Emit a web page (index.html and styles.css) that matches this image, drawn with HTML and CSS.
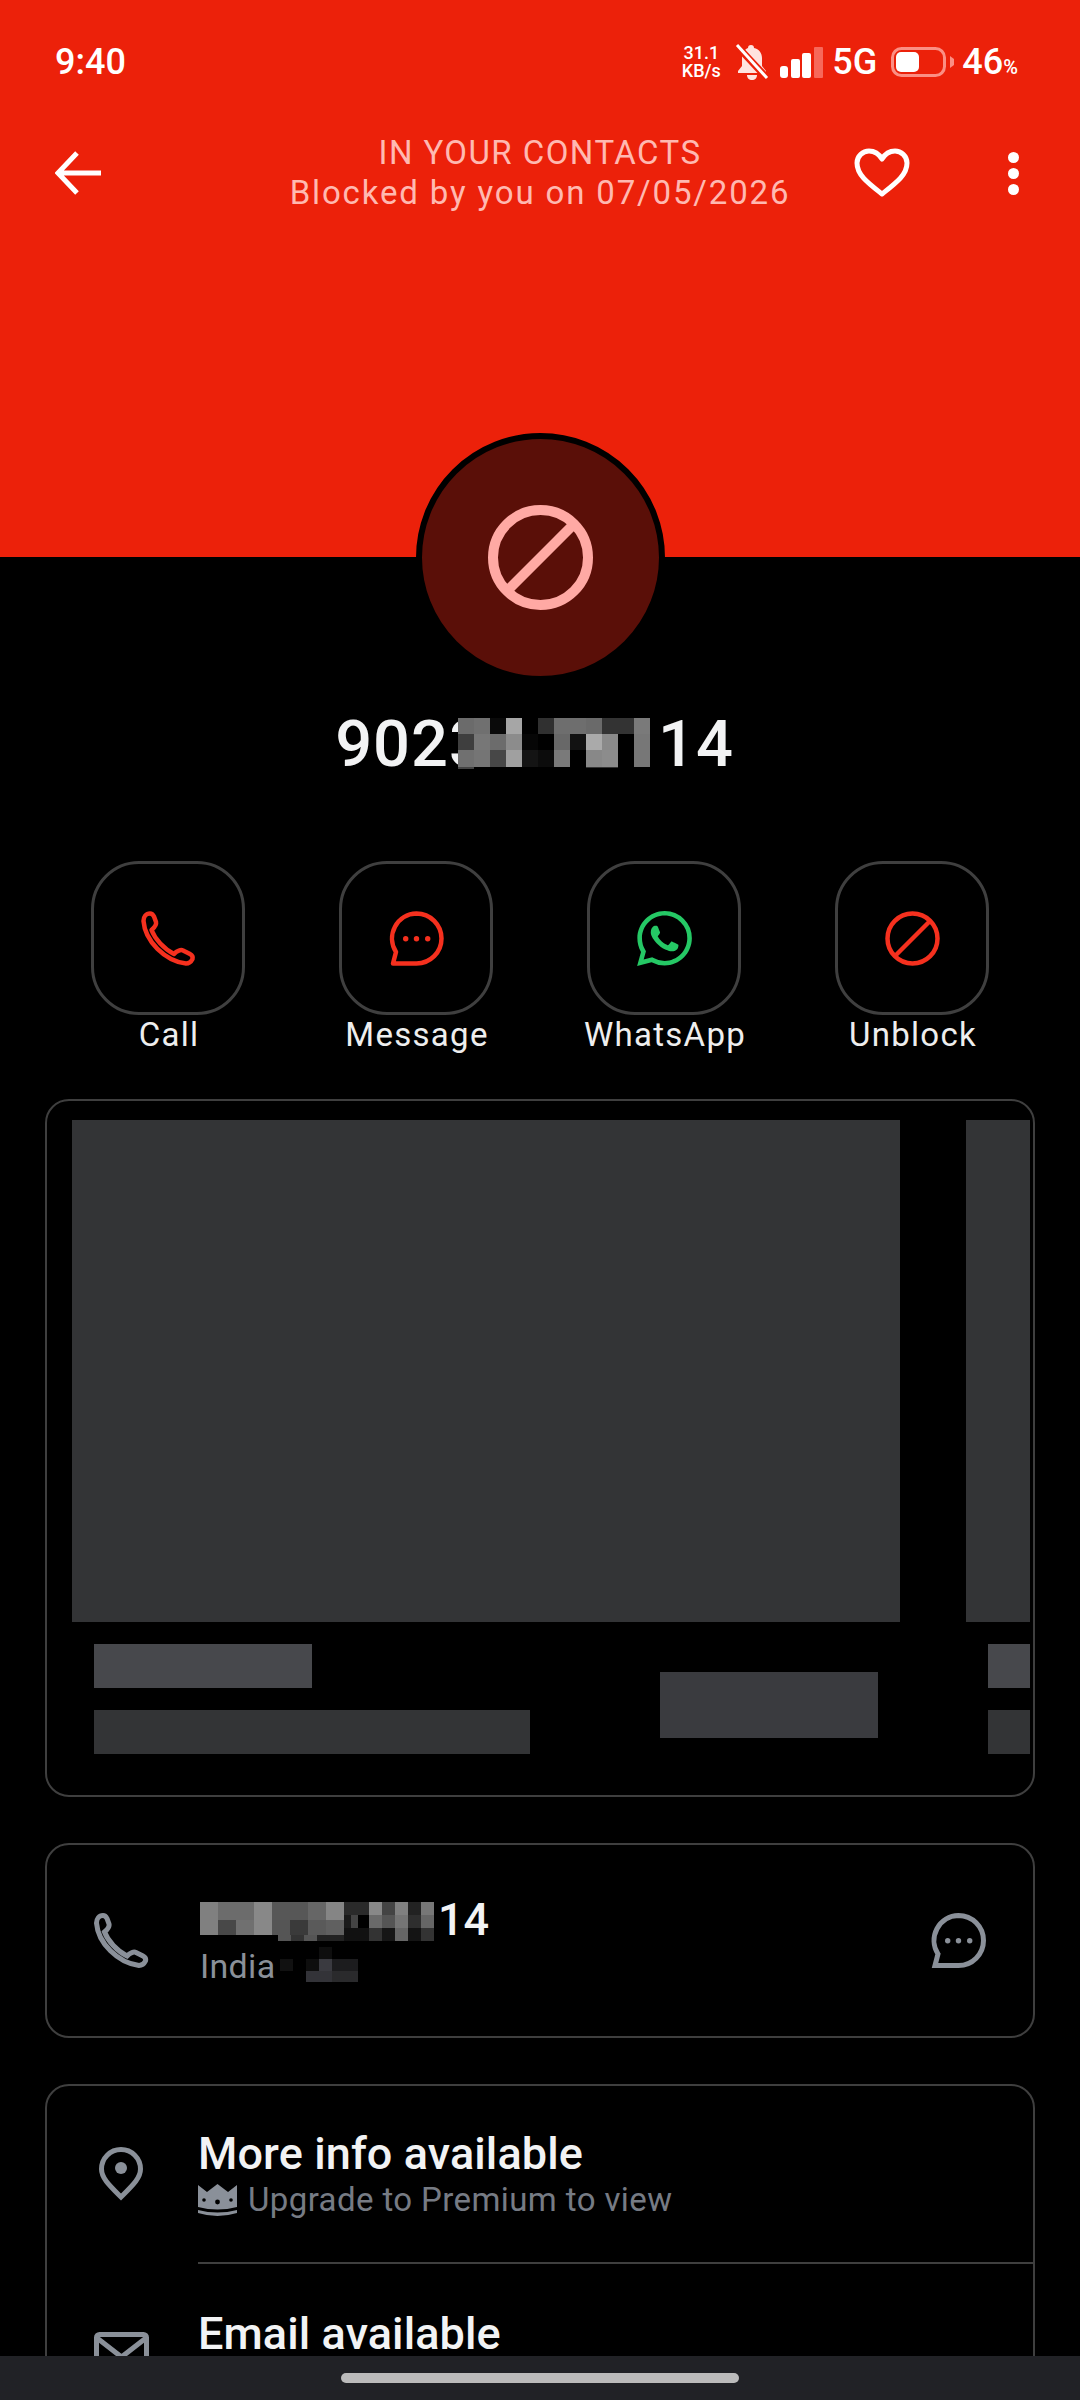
FILE: index.html
```html
<!DOCTYPE html>
<html lang="en">
	<head>
		<meta charset="UTF-8" />
		<meta name="viewport" content="width=device-width, initial-scale=1.0" />
		<title>Contact</title>
		<link rel="stylesheet" href="styles.css">
	</head>
	<body>
		<div class="hero">
			<div class="status-bar">
				<span class="clock">9:40</span>
				<div class="status-icons">
					<div class="speed"><span>31.1</span><span>KB/s</span></div>
					<svg class="bell" viewBox="0 0 34 36">
						<path d="M16 1c2 0 3 1 3 3 5 1 8 5 8 10v8l4 5v2H3v-2l4-5v-9c0-4 3-8 6-9 0-2 1-3 3-3z" fill="#ffe3df" />
						<path d="M12 31h10c0 3-2 5-5 5s-5-2-5-5z" fill="#ffe3df" />
						<path d="M2 2l30 32" stroke="#ec210a" stroke-width="7" />
						<path d="M2 1l30 33" stroke="#fff" stroke-width="3" />
					</svg>
					<svg class="signal" viewBox="0 0 43 31">
						<rect x="0" y="19" width="8" height="12" rx="3" fill="#fff" />
						<rect x="11" y="12" width="9" height="19" rx="2" fill="#fff" />
						<rect x="22" y="6" width="9" height="25" rx="2" fill="#fff" />
						<rect x="34" y="0" width="9" height="31" rx="1" fill="#f7685a" />
					</svg>
					<span class="net">5G</span>
					<svg class="battery" viewBox="0 0 63 30">
						<rect x="1.5" y="1.5" width="52" height="27" rx="9" fill="none" stroke="#fb8f84" stroke-width="3" />
						<rect x="5" y="5" width="23" height="20" rx="5" fill="#fff" />
						<path d="M59 9l4 3v6l-4 3z" fill="#fb8f84" />
					</svg>
					<span class="level">46<small>%</small></span>
				</div>
			</div>
			<div class="nav">
				<svg class="back" viewBox="0 0 46 44">
					<path d="M22 2L3 22l19 20M3 22h43" fill="none" stroke="#fff" stroke-width="5" />
				</svg>
				<div class="title">
					<div class="title-top">IN YOUR CONTACTS</div>
					<div>Blocked by you on 07/05/2026</div>
				</div>
				<div class="nav-actions">
					<svg class="heart" viewBox="0 0 56 50">
						<path d="M28 46C14 35 3 27 3 15 3 8 9 3 15 3c6 0 10 3 13 8 3-5 7-8 13-8 6 0 12 5 12 12 0 12-11 20-25 31z" fill="none" stroke="#fff" stroke-width="5" stroke-linejoin="round" />
					</svg>
					<div class="dots"><i></i><i></i><i></i></div>
				</div>
			</div>
		</div>

		<div class="avatar">
			<svg viewBox="0 0 105 105">
				<circle cx="52.5" cy="52.5" r="47.5" fill="none" stroke="#ffa9a4" stroke-width="10" />
				<path d="M20 85L85 20" stroke="#ffa9a4" stroke-width="10" />
			</svg>
		</div>

		<div class="name">
			<span>9023</span>
			<svg class="mosaic-name" viewBox="0 0 192 52" shape-rendering="crispEdges">
				<rect width="192" height="49" fill="#000" />
				<rect x="0" y="0" width="16" height="16" fill="#6b6b6b" /><rect x="16" y="0" width="16" height="16" fill="#707070" />
				<rect x="32" y="0" width="16" height="16" fill="#0a0a0a" /><rect x="48" y="0" width="16" height="16" fill="#a6a6a6" />
				<rect x="80" y="0" width="16" height="16" fill="#303030" /><rect x="96" y="0" width="16" height="16" fill="#6e6e6e" />
				<rect x="112" y="0" width="16" height="16" fill="#6e6e6e" /><rect x="128" y="0" width="16" height="16" fill="#6a6a6a" />
				<rect x="144" y="0" width="16" height="16" fill="#333" /><rect x="160" y="0" width="16" height="16" fill="#333" />
				<rect x="176" y="0" width="16" height="16" fill="#7a7a7a" />
				<rect x="0" y="16" width="16" height="16" fill="#3e3e3e" /><rect x="16" y="16" width="16" height="16" fill="#777" />
				<rect x="32" y="16" width="16" height="16" fill="#6c6c6c" /><rect x="48" y="16" width="16" height="16" fill="#8c8c8c" />
				<rect x="64" y="16" width="16" height="16" fill="#060606" /><rect x="96" y="16" width="16" height="16" fill="#686868" />
				<rect x="112" y="16" width="16" height="16" fill="#121212" /><rect x="128" y="16" width="16" height="16" fill="#aaa" />
				<rect x="144" y="16" width="16" height="16" fill="#8a8a8a" /><rect x="176" y="16" width="16" height="16" fill="#777" />
				<rect x="0" y="32" width="16" height="17" fill="#707070" /><rect x="16" y="32" width="16" height="17" fill="#757575" />
				<rect x="32" y="32" width="16" height="17" fill="#474747" /><rect x="48" y="32" width="16" height="17" fill="#a0a0a0" />
				<rect x="64" y="32" width="16" height="17" fill="#141414" /><rect x="80" y="32" width="16" height="17" fill="#0c0c0c" />
				<rect x="96" y="32" width="16" height="17" fill="#7a7a7a" /><rect x="128" y="32" width="16" height="17" fill="#888" />
				<rect x="144" y="32" width="16" height="17" fill="#8c8c8c" /><rect x="176" y="32" width="16" height="17" fill="#777" />
				<rect x="0" y="49" width="16" height="2" fill="#444" /><rect x="128" y="49" width="32" height="1" fill="#333" />
			</svg>
			<span>14</span>
		</div>

		<div class="actions">
			<div class="action">
				<div class="action-btn">
					<svg viewBox="0 0 55 55"><path class="red-line" d="M9 2.5C11 2.5 12 3.5 13 5.5L15 11C15.5 13 14 16 10.5 19C14 28 23 38 33 43C36 39.5 40 38.5 42 39.5L49 43C51 44 52 46 51.5 48C50 51 48 52.5 45 52.5C24 50 4 30 2.5 10C2.5 6 5 2.5 9 2.5Z" /></svg>
				</div>
				<span class="action-label">Call</span>
			</div>
			<div class="action">
				<div class="action-btn">
					<svg viewBox="0 0 55 55">
						<path class="red-line" d="M27.5 2.5A25 25 0 0 1 27.5 52.5L4 52.5L7 41A25 25 0 0 1 27.5 2.5Z" />
						<circle cx="16.7" cy="27.7" r="2.7" fill="#f5301e" /><circle cx="27.5" cy="27.7" r="2.7" fill="#f5301e" /><circle cx="38.7" cy="27.7" r="2.7" fill="#f5301e" />
					</svg>
				</div>
				<span class="action-label">Message</span>
			</div>
			<div class="action">
				<div class="action-btn">
					<svg viewBox="0 0 24 24"><path fill="#25c865" d="M17.472 14.382c-.297-.149-1.758-.867-2.03-.967-.273-.099-.471-.148-.67.15-.197.297-.767.966-.94 1.164-.173.199-.347.223-.644.075-.297-.15-1.255-.463-2.39-1.475-.883-.788-1.48-1.761-1.653-2.059-.173-.297-.018-.458.13-.606.134-.133.298-.347.446-.52.149-.174.198-.298.298-.497.099-.198.05-.371-.025-.52-.075-.149-.669-1.612-.916-2.207-.242-.579-.487-.5-.669-.51-.173-.008-.371-.01-.57-.01-.198 0-.52.074-.792.372-.272.297-1.04 1.016-1.04 2.479 0 1.462 1.065 2.875 1.213 3.074.149.198 2.096 3.2 5.077 4.487.709.306 1.262.489 1.694.625.712.227 1.36.195 1.871.118.571-.085 1.758-.719 2.006-1.413.248-.694.248-1.289.173-1.413-.074-.124-.272-.198-.57-.347m-5.421 7.403h-.004a9.87 9.87 0 01-5.031-1.378l-.361-.214-3.741.982.998-3.648-.235-.374a9.86 9.86 0 01-1.51-5.26c.001-5.45 4.436-9.884 9.888-9.884 2.64 0 5.122 1.03 6.988 2.898a9.825 9.825 0 012.893 6.994c-.003 5.45-4.437 9.884-9.885 9.884m8.413-18.297A11.815 11.815 0 0012.05 0C5.495 0 .16 5.335.157 11.892c0 2.096.547 4.142 1.588 5.945L.057 24l6.305-1.654a11.882 11.882 0 005.683 1.448h.005c6.554 0 11.89-5.335 11.893-11.893a11.821 11.821 0 00-3.48-8.413z" /></svg>
				</div>
				<span class="action-label">WhatsApp</span>
			</div>
			<div class="action">
				<div class="action-btn">
					<svg viewBox="0 0 55 55">
						<circle class="red-line" cx="27.5" cy="27.5" r="25" />
						<path class="red-line" d="M10 45L45 10" />
					</svg>
				</div>
				<span class="action-label">Unblock</span>
			</div>
		</div>

		<div class="card card-ad">
			<div class="carousel">
				<div class="slide">
					<div class="slide-img"></div>
					<div class="slide-foot">
						<div class="slide-text"><div class="bar-short"></div><div class="bar-long"></div></div>
						<div class="bar-cta"></div>
					</div>
				</div>
				<div class="slide">
					<div class="slide-img"></div>
					<div class="slide-foot">
						<div class="slide-text"><div class="bar-short"></div><div class="bar-long"></div></div>
						<div class="bar-cta"></div>
					</div>
				</div>
			</div>
		</div>

		<div class="card card-phone">
			<div class="row-icon">
				<svg class="icon" viewBox="0 0 55 55"><path class="gray-line" d="M9 2.5C11 2.5 12 3.5 13 5.5L15 11C15.5 13 14 16 10.5 19C14 28 23 38 33 43C36 39.5 40 38.5 42 39.5L49 43C51 44 52 46 51.5 48C50 51 48 52.5 45 52.5C24 50 4 30 2.5 10C2.5 6 5 2.5 9 2.5Z" /></svg>
			</div>
			<div class="phone-text">
				<div class="phone-number">
					<svg class="mosaic-number" viewBox="0 0 234 39" shape-rendering="crispEdges">
						<rect x="0" y="0" width="18" height="33" fill="#808080" /><rect x="18" y="0" width="36" height="18" fill="#6c6c6c" />
						<rect x="54" y="0" width="18" height="33" fill="#888" /><rect x="72" y="0" width="36" height="18" fill="#575757" />
						<rect x="108" y="0" width="18" height="18" fill="#666" /><rect x="126" y="0" width="18" height="18" fill="#858585" />
						<rect x="144" y="0" width="25" height="13" fill="#2a2a2a" /><rect x="169" y="0" width="13" height="13" fill="#888" />
						<rect x="182" y="0" width="13" height="13" fill="#444" /><rect x="195" y="0" width="13" height="13" fill="#808080" />
						<rect x="208" y="0" width="13" height="13" fill="#222" /><rect x="221" y="0" width="13" height="13" fill="#777" />
						<rect x="18" y="18" width="18" height="15" fill="#484848" /><rect x="36" y="18" width="18" height="15" fill="#707070" />
						<rect x="72" y="18" width="18" height="15" fill="#555" /><rect x="90" y="18" width="18" height="15" fill="#3a3a3a" />
						<rect x="108" y="18" width="18" height="15" fill="#5a5a5a" /><rect x="126" y="18" width="18" height="15" fill="#606060" />
						<rect x="144" y="13" width="7" height="13" fill="#1a1a1a" /><rect x="151" y="13" width="7" height="13" fill="#444" />
						<rect x="169" y="13" width="13" height="13" fill="#6a6a6a" /><rect x="182" y="13" width="13" height="13" fill="#555" />
						<rect x="195" y="13" width="13" height="13" fill="#757575" /><rect x="208" y="13" width="13" height="13" fill="#2e2e2e" />
						<rect x="221" y="13" width="13" height="13" fill="#666" />
						<rect x="144" y="26" width="25" height="13" fill="#111" /><rect x="169" y="26" width="13" height="13" fill="#333" />
						<rect x="182" y="26" width="13" height="13" fill="#161616" /><rect x="195" y="26" width="13" height="13" fill="#666" />
						<rect x="208" y="26" width="13" height="13" fill="#141414" /><rect x="221" y="26" width="13" height="13" fill="#333" />
						<rect x="78" y="33" width="13" height="6" fill="#555" /><rect x="91" y="33" width="13" height="6" fill="#333" />
						<rect x="104" y="33" width="13" height="6" fill="#555" /><rect x="117" y="33" width="27" height="6" fill="#222" />
					</svg>
					<span>14</span>
				</div>
				<div class="phone-place">
					<span>India</span>
					<svg class="mosaic-place" viewBox="0 0 78 35" shape-rendering="crispEdges">
						<rect x="39" y="0" width="13" height="12" fill="#0e0e0e" />
						<rect x="0" y="12" width="13" height="12" fill="#111" /><rect x="26" y="12" width="13" height="12" fill="#0e0e0e" />
						<rect x="39" y="12" width="13" height="12" fill="#3a3a40" /><rect x="52" y="12" width="26" height="12" fill="#1c1c1e" />
						<rect x="26" y="24" width="26" height="11" fill="#333338" /><rect x="52" y="24" width="26" height="11" fill="#2a2a2c" />
					</svg>
				</div>
			</div>
			<svg class="icon icon-msg" viewBox="0 0 55 55">
				<path class="gray-line" d="M27.5 2.5A25 25 0 0 1 27.5 52.5L4 52.5L7 41A25 25 0 0 1 27.5 2.5Z" />
				<circle cx="16.7" cy="27.7" r="2.7" fill="#8a9099" /><circle cx="27.5" cy="27.7" r="2.7" fill="#8a9099" /><circle cx="38.7" cy="27.7" r="2.7" fill="#8a9099" />
			</svg>
		</div>

		<div class="card card-info">
			<div class="info-row">
				<div class="row-icon">
					<svg class="pin" viewBox="0 0 44 54">
						<path class="gray-line" d="M22 50C10 38 2.5 31 2.5 22A19.5 19.5 0 0 1 41.5 22C41.5 31 34 38 22 50Z" />
						<circle cx="22" cy="21" r="6" fill="#8a9099" />
					</svg>
				</div>
				<div class="info-text">
					<div class="info-title">More info available</div>
					<div class="info-sub">
						<svg class="crown" viewBox="0 0 39 33">
							<path d="M0 1L9 8L19.5 0L30 8L39 1V23Q19.5 28 0 23Z" fill="#8a9099" />
							<circle cx="6" cy="16" r="1.8" fill="#000" /><circle cx="19.5" cy="18" r="2.4" fill="#000" /><circle cx="33" cy="16" r="1.8" fill="#000" />
							<path d="M0 26Q19.5 31 39 26V29Q19.5 35 0 29Z" fill="#8a9099" />
						</svg>
						<span>Upgrade to Premium to view</span>
					</div>
				</div>
			</div>
			<div class="divider"></div>
			<div class="info-row">
				<div class="row-icon">
					<svg class="mail" viewBox="0 0 55 44">
						<rect x="2.5" y="2.5" width="50" height="39" rx="3" fill="none" stroke="#8a9099" stroke-width="5" />
						<path class="gray-line" d="M3 6L27.5 25L52 6" />
					</svg>
				</div>
				<div class="info-text">
					<div class="info-title">Email available</div>
				</div>
			</div>
		</div>

		<div class="nav-bar"><div class="nav-pill"></div></div>
	</body>
</html>
```

FILE: styles.css
```css
* {
	margin: 0;
	padding: 0;
	box-sizing: border-box;
	font-family: "Roboto", sans-serif;
}

body {
	background-color: #000;
	width: 1080px;
	height: 2400px;
	overflow: hidden;
	color: #f2f3f4;
}

svg {
	display: block;
	flex-shrink: 0;
}

.red-line {
	fill: none;
	stroke: #f5301e;
	stroke-width: 4.5;
	stroke-linejoin: round;
}

.gray-line {
	fill: none;
	stroke: #8a9099;
	stroke-width: 5;
}

/* red top */
.hero {
	height: 557px;
	background-color: #ec210a;
	color: #fff;
}

.status-bar {
	display: flex;
	justify-content: space-between;
	align-items: center;
	height: 124px;
	padding: 0 62px 0 55px;
}

.clock {
	font-size: 36px;
	font-weight: 500;
}

.status-icons {
	display: flex;
	align-items: center;
}

.speed {
	display: flex;
	flex-direction: column;
	align-items: center;
	font-size: 18px;
	font-weight: 500;
	line-height: 18px;
	width: 42px;
	margin-right: 13px;
}

.bell {
	width: 34px;
	height: 36px;
	margin-right: 11px;
}

.signal {
	width: 43px;
	height: 31px;
	margin: 0 9px 0 0;
}

.net {
	font-size: 36px;
	font-weight: 500;
	margin-right: 14px;
}

.battery {
	width: 63px;
	height: 30px;
	margin-right: 8px;
}

.level {
	font-size: 36px;
	font-weight: 500;
}

.level small {
	font-size: 20px;
}

.nav {
	display: grid;
	grid-template-columns: 1fr auto 1fr;
	align-items: center;
	height: 98px;
	padding: 0 55px;
}

.back {
	width: 46px;
	height: 44px;
}

.title {
	text-align: center;
	font-size: 33px;
	line-height: 40px;
	letter-spacing: 1.85px;
	color: #ffb9b1;
}

.title-top {
	letter-spacing: 1.45px;
}

.nav-actions {
	display: flex;
	justify-content: flex-end;
	align-items: center;
	gap: 98px;
	margin-right: 6px;
}

.heart {
	width: 56px;
	height: 50px;
}

.dots {
	display: flex;
	flex-direction: column;
	gap: 5px;
}

.dots i {
	width: 11px;
	height: 11px;
	border-radius: 50%;
	background: #fff;
}

/* avatar + name */
.avatar {
	display: flex;
	align-items: center;
	justify-content: center;
	width: 249px;
	height: 249px;
	margin: -124px auto 0;
	position: relative;
	border: 6px solid #000;
	border-radius: 50%;
	background-color: #5a0f08;
}

.avatar svg {
	width: 105px;
	height: 105px;
}

.name {
	display: flex;
	justify-content: center;
	align-items: flex-start;
	height: 80px;
	margin-top: 21px;
	padding-right: 11px;
	font-size: 65px;
	font-weight: 500;
	line-height: 82px;
	letter-spacing: 1px;
}

.mosaic-name {
	width: 192px;
	height: 52px;
	margin: 15px 8px 0 -29px;
}

/* round buttons */
.actions {
	display: flex;
	justify-content: space-between;
	margin-top: 78px;
	padding: 0 91px;
}

.action {
	display: flex;
	flex-direction: column;
	align-items: center;
	width: 154px;
	font-size: 33px;
	line-height: 40px;
	letter-spacing: 1.3px;
	white-space: nowrap;
	color: #eee;
}

.action-label {
	padding-left: 2px;
}

.action-btn {
	display: flex;
	align-items: center;
	justify-content: center;
	width: 154px;
	height: 154px;
	border: 3px solid #3f3f3f;
	border-radius: 48px;
}

.action-btn svg {
	width: 55px;
	height: 55px;
}

/* cards */
.card {
	margin: 0 45px;
	border: 2px solid #3f3f3f;
	border-radius: 24px;
}

.card-ad {
	height: 698px;
	margin-top: 44px;
}

.carousel {
	display: flex;
	gap: 66px;
	overflow: hidden;
	margin: 19px 3px 0 25px;
}

.slide {
	flex: 0 0 828px;
}

.slide-img {
	height: 502px;
	background-color: #333436;
}

.slide-foot {
	display: flex;
	justify-content: space-between;
	align-items: flex-end;
	padding: 22px 22px 0;
}

.slide-text {
	display: flex;
	flex-direction: column;
	gap: 22px;
}

.bar-short {
	width: 218px;
	height: 44px;
	background-color: #47484c;
}

.bar-long {
	width: 436px;
	height: 44px;
	background-color: #333436;
}

.bar-cta {
	width: 218px;
	height: 66px;
	margin-bottom: 16px;
	background-color: #3a3b3f;
}

.card-phone {
	display: flex;
	align-items: center;
	height: 195px;
	margin-top: 46px;
	padding-right: 47px;
}

.row-icon {
	display: flex;
	justify-content: center;
	flex: 0 0 148px;
}

.icon {
	width: 55px;
	height: 55px;
}

.phone-text {
	flex: 1;
	margin-top: 6px;
}

.phone-number {
	display: flex;
	align-items: flex-start;
	gap: 4px;
	height: 44px;
	padding-left: 5px;
	font-size: 45px;
	font-weight: 500;
	line-height: 36px;
}

.mosaic-number {
	width: 234px;
	height: 39px;
}

.phone-place {
	display: flex;
	align-items: flex-end;
	gap: 5px;
	padding-left: 5px;
	font-size: 34px;
	line-height: 40px;
	letter-spacing: 0.3px;
	color: #8a9099;
}

.mosaic-place {
	width: 78px;
	height: 35px;
	margin-bottom: 4px;
}

.card-info {
	height: 420px;
	margin-top: 46px;
}

.info-row {
	display: flex;
	align-items: flex-start;
	height: 176px;
	padding-top: 42px;
}

.info-text {
	flex: 1;
	padding-left: 3px;
}

.info-title {
	font-size: 45px;
	font-weight: 500;
	line-height: 52px;
	letter-spacing: 0.1px;
}

.info-sub {
	display: flex;
	align-items: center;
	gap: 11px;
	font-size: 33px;
	line-height: 40px;
	letter-spacing: 0.4px;
	color: #767b84;
}

.crown {
	width: 39px;
	height: 33px;
}

.pin {
	width: 44px;
	height: 54px;
	margin-top: 19px;
}

.mail {
	width: 55px;
	height: 44px;
	margin-top: 24px;
}

.divider {
	height: 2px;
	margin: 0 0 2px 151px;
	background-color: #3f3f3f;
}

/* gesture bar lies over the list */
.nav-bar {
	position: fixed;
	left: 0;
	right: 0;
	top: 2356px;
	height: 44px;
	background-color: #212226;
	display: flex;
	justify-content: center;
	padding-top: 17px;
}

.nav-pill {
	width: 398px;
	height: 10px;
	border-radius: 5px;
	background-color: #bbb;
}
```
